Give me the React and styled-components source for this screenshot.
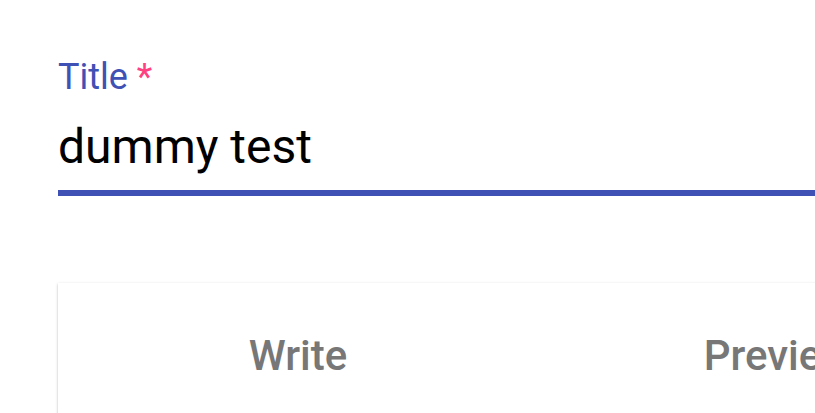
import React from 'react'
import styled, { createGlobalStyle } from 'styled-components'

const GlobalStyle = createGlobalStyle`
  body {
    margin: 0;
    padding: 0;
    background: #fff;
    font-family: Roboto, 'Liberation Sans', sans-serif;
    overflow: hidden;
  }
`

const Page = styled.div`
  width: 1500px;
  padding: 59px 0 0 58px;
  box-sizing: border-box;
`

const Field = styled.div`
  display: flex;
  flex-direction: column;
`

const Label = styled.label`
  font-size: 36px;
  line-height: 1;
  color: #3f51b5;
  > span {
    color: #ff4081;
  }
`

const Input = styled.input`
  margin-top: 5px;
  border: 0;
  outline: none;
  border-bottom: 6px solid #3f51b5;
  padding: 18px 0 15px;
  font-family: inherit;
  font-size: 48px;
  line-height: 57px;
  height: 57px;
  color: #000;
  background: transparent;
`

const Card = styled.div`
  margin-top: 87px;
  width: 960px;
  background: #fff;
  box-shadow: 0 1px 3px 0 rgba(0,0,0,0.2), 0 1px 1px 0 rgba(0,0,0,0.14), 0 2px 1px -1px rgba(0,0,0,0.12);
`

const Tabs = styled.div`
  display: flex;
`

const Tab = styled.button`
  flex: 1;
  height: 144px;
  border: 0;
  background: transparent;
  font-family: inherit;
  font-size: 42px;
  font-weight: 500;
  color: ${p => (p.active ? '#3f51b5' : '#777777')};
  display: flex;
  align-items: center;
  justify-content: center;
  padding: 0;
`

export default function App() {
  return (
    <>
      <GlobalStyle />
      <Page>
        <Field>
          <Label>Title <span>*</span></Label>
          <Input defaultValue="dummy test" />
        </Field>
        <Card>
          <Tabs>
            <Tab>Write</Tab>
            <Tab>Preview</Tab>
          </Tabs>
        </Card>
      </Page>
    </>
  )
}
